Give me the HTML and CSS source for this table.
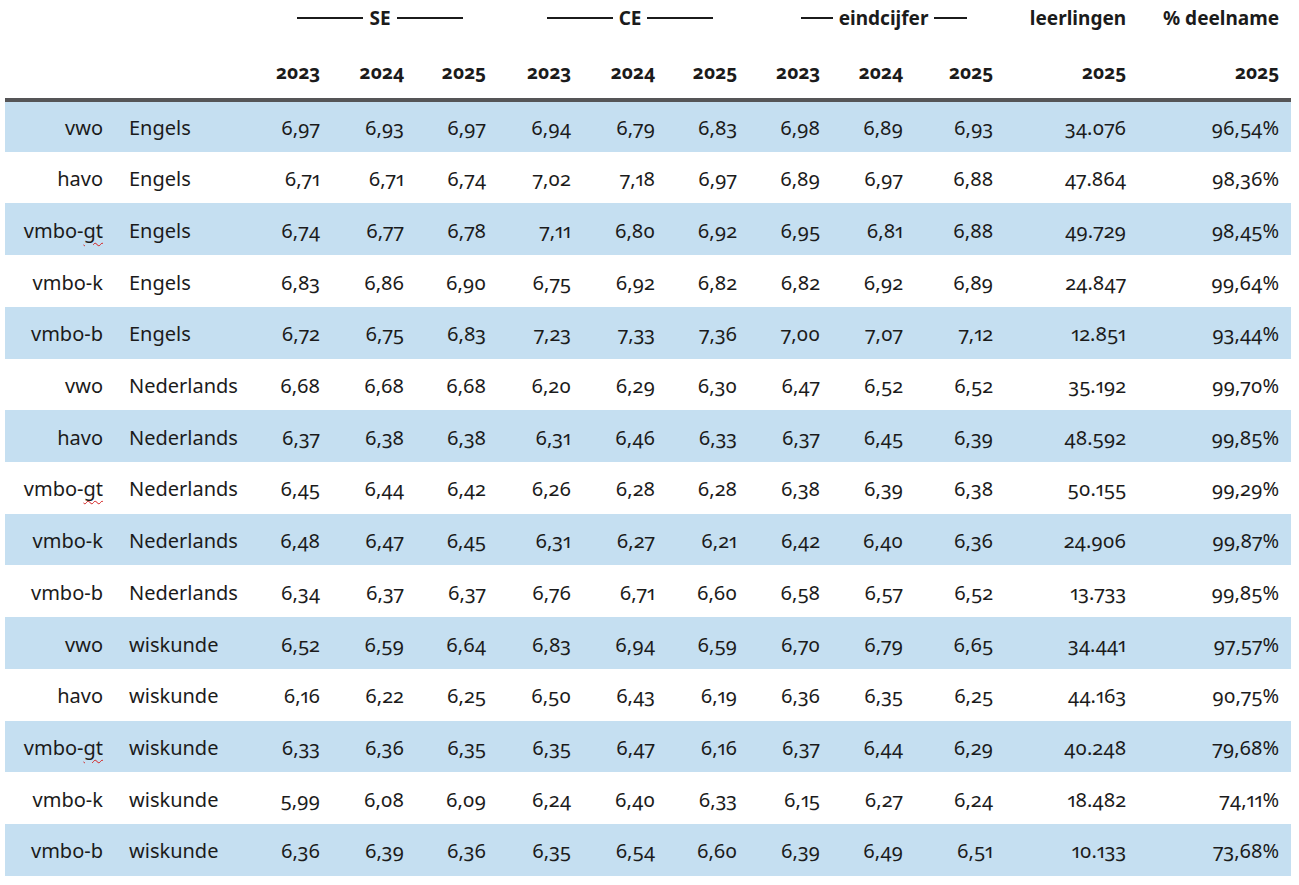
FILE: index.html
```html
<!DOCTYPE html>
<html lang="nl">
<head>
<meta charset="utf-8">
<title>Examencijfers</title>
<link rel="stylesheet" href="styles.css">
</head>
<body>
<table class="grid">
  <colgroup>
    <col class="c-lvl"><col class="c-sub">
    <col class="c-83"><col class="c-84"><col class="c-82">
    <col class="c-85"><col class="c-84"><col class="c-82">
    <col class="c-83"><col class="c-83"><col class="c-90">
    <col class="c-133"><col class="c-157">
  </colgroup>
  <thead>
    <tr class="h1">
      <th></th><th></th>
      <th colspan="3" class="grp"><div class="rule"><span class="ln"></span><span>SE</span><span class="ln"></span></div></th>
      <th colspan="3" class="grp"><div class="rule"><span class="ln"></span><span>CE</span><span class="ln"></span></div></th>
      <th colspan="3" class="grp"><div class="rule"><span class="ln"></span><span>eindcijfer</span><span class="ln"></span></div></th>
      <th class="num">leerlingen</th>
      <th class="num pct">% deelname</th>
    </tr>
    <tr class="h2">
      <th></th><th></th>
      <th class="num">2023</th><th class="num">2024</th><th class="num">2025</th>
      <th class="num">2023</th><th class="num">2024</th><th class="num">2025</th>
      <th class="num">2023</th><th class="num">2024</th><th class="num">2025</th>
      <th class="num">2025</th>
      <th class="num pct">2025</th>
    </tr>
  </thead>
  <tbody>
    <tr class="alt"><td class="lvl">vwo</td><td class="sub">Engels</td><td class="num">6,97</td><td class="num">6,93</td><td class="num">6,97</td><td class="num">6,94</td><td class="num">6,79</td><td class="num">6,83</td><td class="num">6,98</td><td class="num">6,89</td><td class="num">6,93</td><td class="num">34.076</td><td class="num pct">96,54%</td></tr>
    <tr><td class="lvl">havo</td><td class="sub">Engels</td><td class="num">6,71</td><td class="num">6,71</td><td class="num">6,74</td><td class="num">7,02</td><td class="num">7,18</td><td class="num">6,97</td><td class="num">6,89</td><td class="num">6,97</td><td class="num">6,88</td><td class="num">47.864</td><td class="num pct">98,36%</td></tr>
    <tr class="alt"><td class="lvl">vmbo-<span class="sp">gt</span></td><td class="sub">Engels</td><td class="num">6,74</td><td class="num">6,77</td><td class="num">6,78</td><td class="num">7,11</td><td class="num">6,80</td><td class="num">6,92</td><td class="num">6,95</td><td class="num">6,81</td><td class="num">6,88</td><td class="num">49.729</td><td class="num pct">98,45%</td></tr>
    <tr><td class="lvl">vmbo-k</td><td class="sub">Engels</td><td class="num">6,83</td><td class="num">6,86</td><td class="num">6,90</td><td class="num">6,75</td><td class="num">6,92</td><td class="num">6,82</td><td class="num">6,82</td><td class="num">6,92</td><td class="num">6,89</td><td class="num">24.847</td><td class="num pct">99,64%</td></tr>
    <tr class="alt"><td class="lvl">vmbo-b</td><td class="sub">Engels</td><td class="num">6,72</td><td class="num">6,75</td><td class="num">6,83</td><td class="num">7,23</td><td class="num">7,33</td><td class="num">7,36</td><td class="num">7,00</td><td class="num">7,07</td><td class="num">7,12</td><td class="num">12.851</td><td class="num pct">93,44%</td></tr>
    <tr><td class="lvl">vwo</td><td class="sub">Nederlands</td><td class="num">6,68</td><td class="num">6,68</td><td class="num">6,68</td><td class="num">6,20</td><td class="num">6,29</td><td class="num">6,30</td><td class="num">6,47</td><td class="num">6,52</td><td class="num">6,52</td><td class="num">35.192</td><td class="num pct">99,70%</td></tr>
    <tr class="alt"><td class="lvl">havo</td><td class="sub">Nederlands</td><td class="num">6,37</td><td class="num">6,38</td><td class="num">6,38</td><td class="num">6,31</td><td class="num">6,46</td><td class="num">6,33</td><td class="num">6,37</td><td class="num">6,45</td><td class="num">6,39</td><td class="num">48.592</td><td class="num pct">99,85%</td></tr>
    <tr><td class="lvl">vmbo-<span class="sp">gt</span></td><td class="sub">Nederlands</td><td class="num">6,45</td><td class="num">6,44</td><td class="num">6,42</td><td class="num">6,26</td><td class="num">6,28</td><td class="num">6,28</td><td class="num">6,38</td><td class="num">6,39</td><td class="num">6,38</td><td class="num">50.155</td><td class="num pct">99,29%</td></tr>
    <tr class="alt"><td class="lvl">vmbo-k</td><td class="sub">Nederlands</td><td class="num">6,48</td><td class="num">6,47</td><td class="num">6,45</td><td class="num">6,31</td><td class="num">6,27</td><td class="num">6,21</td><td class="num">6,42</td><td class="num">6,40</td><td class="num">6,36</td><td class="num">24.906</td><td class="num pct">99,87%</td></tr>
    <tr><td class="lvl">vmbo-b</td><td class="sub">Nederlands</td><td class="num">6,34</td><td class="num">6,37</td><td class="num">6,37</td><td class="num">6,76</td><td class="num">6,71</td><td class="num">6,60</td><td class="num">6,58</td><td class="num">6,57</td><td class="num">6,52</td><td class="num">13.733</td><td class="num pct">99,85%</td></tr>
    <tr class="alt"><td class="lvl">vwo</td><td class="sub">wiskunde</td><td class="num">6,52</td><td class="num">6,59</td><td class="num">6,64</td><td class="num">6,83</td><td class="num">6,94</td><td class="num">6,59</td><td class="num">6,70</td><td class="num">6,79</td><td class="num">6,65</td><td class="num">34.441</td><td class="num pct">97,57%</td></tr>
    <tr><td class="lvl">havo</td><td class="sub">wiskunde</td><td class="num">6,16</td><td class="num">6,22</td><td class="num">6,25</td><td class="num">6,50</td><td class="num">6,43</td><td class="num">6,19</td><td class="num">6,36</td><td class="num">6,35</td><td class="num">6,25</td><td class="num">44.163</td><td class="num pct">90,75%</td></tr>
    <tr class="alt"><td class="lvl">vmbo-<span class="sp">gt</span></td><td class="sub">wiskunde</td><td class="num">6,33</td><td class="num">6,36</td><td class="num">6,35</td><td class="num">6,35</td><td class="num">6,47</td><td class="num">6,16</td><td class="num">6,37</td><td class="num">6,44</td><td class="num">6,29</td><td class="num">40.248</td><td class="num pct">79,68%</td></tr>
    <tr><td class="lvl">vmbo-k</td><td class="sub">wiskunde</td><td class="num">5,99</td><td class="num">6,08</td><td class="num">6,09</td><td class="num">6,24</td><td class="num">6,40</td><td class="num">6,33</td><td class="num">6,15</td><td class="num">6,27</td><td class="num">6,24</td><td class="num">18.482</td><td class="num pct">74,11%</td></tr>
    <tr class="alt"><td class="lvl">vmbo-b</td><td class="sub">wiskunde</td><td class="num">6,36</td><td class="num">6,39</td><td class="num">6,36</td><td class="num">6,35</td><td class="num">6,54</td><td class="num">6,60</td><td class="num">6,39</td><td class="num">6,49</td><td class="num">6,51</td><td class="num">10.133</td><td class="num pct">73,68%</td></tr>
  </tbody>
</table>
</body>
</html>
```

FILE: styles.css
```css
html, body {
  margin: 0;
  padding: 0;
  background: #ffffff;
}
body {
  padding-left: 5px;
  font-family: "Noto Sans", "Open Sans", sans-serif;
  font-size: 20px;
  color: #1b1b1b;
  font-variant-numeric: oldstyle-nums proportional-nums;
}
.grid {
  border-collapse: collapse;
  table-layout: fixed;
  width: 1286px;
}
.c-lvl { width: 108px; }
.c-sub { width: 132px; }
.c-82 { width: 82px; }
.c-83 { width: 83px; }
.c-84 { width: 84px; }
.c-85 { width: 85px; }
.c-90 { width: 90px; }
.c-133 { width: 133px; }
.c-157 { width: 157px; }

th, td {
  padding: 0;
  white-space: nowrap;
}
th {
  font-weight: 700;
  font-size: 19px;
}
.h1 th {
  height: 45px;
  vertical-align: top;
  padding-top: 5px;
  box-sizing: border-box;
}
.h2 th {
  height: 52px;
  vertical-align: middle;
  padding-top: 1px;
  border-bottom: 4px solid #555557;
}
.grp {
  padding-left: 29px;
  padding-right: 8px;
}
.rule {
  display: flex;
  align-items: center;
  gap: 6px;
  width: 166px;
  margin: 0 auto;
}
.ln {
  flex: 1;
  height: 2px;
  background: #1b1b1b;
}
.num {
  text-align: right;
  padding-right: 8px;
}
.pct {
  padding-right: 12px;
}
tbody tr {
  height: 51.73px;
}
tbody td {
  vertical-align: middle;
  padding-top: 2px;
}
tr.alt td {
  background: #c5dff1;
}
.lvl {
  text-align: right;
  padding-right: 10px;
}
.sub {
  text-align: left;
  padding-left: 16px;
}
.sp {
  text-decoration: underline wavy #d42020;
  text-decoration-thickness: 1px;
  text-underline-offset: 4px;
}
```
